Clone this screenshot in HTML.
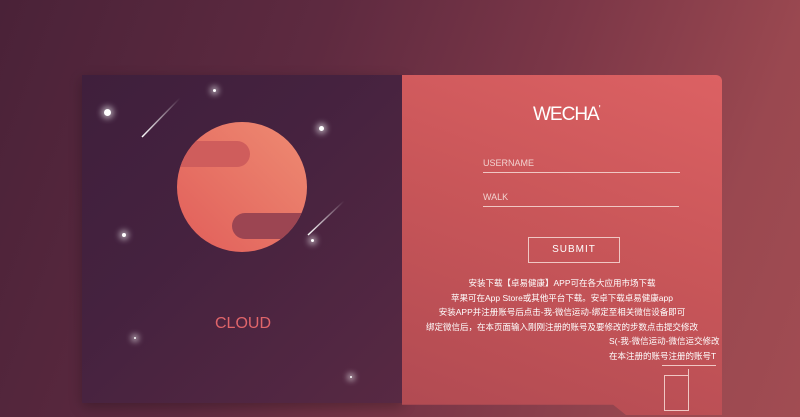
<!DOCTYPE html>
<html><head><meta charset="utf-8"><style>
*{margin:0;padding:0;box-sizing:border-box}
body{width:800px;height:417px;overflow:hidden;position:relative;font-family:"Liberation Sans","Noto Sans CJK SC",sans-serif;
background:linear-gradient(110deg,#4a2238 0%,#5e2a40 35%,#7a3647 60%,#9a4850 85%,#a14c52 100%);}
.left{position:absolute;left:82px;top:75px;width:321px;height:328px;background:linear-gradient(135deg,#3f1f3c 0%,#45223f 40%,#582943 100%);box-shadow:0 4px 12px rgba(0,0,0,.25)}
.right{position:absolute;left:402px;top:75px;width:320px;height:340px;border-radius:0 6px 0 0;background:linear-gradient(200deg,#dc6163 0%,#c95659 45%,#b04a52 100%);
clip-path:polygon(0 0,100% 0,100% 100%,70% 100%,66% 97%,0 97%)}
.star{position:absolute;border-radius:50%;background:#fff;box-shadow:0 0 6px 3px rgba(255,255,255,.5)}
.t{position:absolute;color:#fff;white-space:nowrap}
.line{position:absolute;height:1px;background:#f0c7c4}
</style></head><body>
<div class="left">
<svg width="321" height="328" style="position:absolute;left:0;top:0">
<defs><clipPath id="c"><circle cx="160" cy="112" r="65"/></clipPath>
<linearGradient id="g" x1="1" y1="0" x2="0" y2="1"><stop offset="0" stop-color="#ee8b72"/><stop offset="1" stop-color="#e15e5a"/></linearGradient>
<linearGradient id="m" x1="0" y1="1" x2="1" y2="0"><stop offset="0" stop-color="#fff"/><stop offset="1" stop-color="#fff" stop-opacity="0"/></linearGradient></defs>
<circle cx="160" cy="112" r="65" fill="url(#g)"/>
<g clip-path="url(#c)"><rect x="60" y="66" width="108" height="26" rx="13" fill="#cf5d5c"/><rect x="150" y="138" width="100" height="26" rx="13" fill="#9c4552"/></g>
<line x1="60" y1="62" x2="98" y2="23" stroke="url(#m)" stroke-width="1.5"/>
<line x1="226" y1="160" x2="262" y2="126" stroke="url(#m)" stroke-width="1.5"/>
</svg>
<div class="star" style="left:22px;top:34px;width:7px;height:7px"></div>
<div class="star" style="left:131px;top:14px;width:3px;height:3px"></div>
<div class="star" style="left:237px;top:51px;width:5px;height:5px"></div>
<div class="star" style="left:40px;top:158px;width:4px;height:4px"></div>
<div class="star" style="left:229px;top:164px;width:3px;height:3px"></div>
<div class="star" style="left:52px;top:262px;width:2px;height:2px"></div>
<div class="star" style="left:268px;top:301px;width:2px;height:2px"></div>
<div class="t" style="left:133px;top:240px;font-size:16px;color:#e0656a;font-weight:300">CLOUD</div>
</div>
<div class="right">
<div class="t" style="left:131px;top:29px;font-size:19px;letter-spacing:-1px">WECHA<span style="font-size:10px;vertical-align:top">'</span></div>
<div class="t" style="left:81px;top:83px;font-size:9px;color:#f2d2cf">USERNAME</div>
<div class="line" style="left:81px;top:97px;width:197px"></div>
<div class="t" style="left:81px;top:117px;font-size:9px;color:#f2d2cf">WALK</div>
<div class="line" style="left:81px;top:131px;width:196px"></div>
<div style="position:absolute;left:126px;top:162px;width:92px;height:26px;border:1.5px solid #f0c7c4"></div>
<div class="t" style="left:126px;top:169px;width:92px;text-align:center;font-size:10px;letter-spacing:1px">SUBMIT</div>
<div class="t" style="left:0;width:320px;top:201px;text-align:center;font-size:8.5px;line-height:14.5px">安装下载【卓易健康】APP可在各大应用市场下载<br>苹果可在App Store或其他平台下载。安卓下载卓易健康app<br>安装APP并注册账号后点击-我-微信运动-绑定至相关微信设备即可<br>绑定微信后，在本页面输入刚刚注册的账号及要修改的步数点击提交修改</div>
<div class="t" style="left:207px;top:259px;font-size:8.5px;line-height:15px">S(-我-微信运动-微信运交修改<br>在本注册的账号注册的账号T</div>
<div class="line" style="left:260px;top:290px;width:54px"></div>
<div style="position:absolute;left:262px;top:300px;width:25px;height:36px;border:1px solid #f0c7c4;border-right:none"></div>
<div style="position:absolute;left:286px;top:294px;width:1px;height:42px;background:#f0c7c4"></div>
</div>
</body></html>
